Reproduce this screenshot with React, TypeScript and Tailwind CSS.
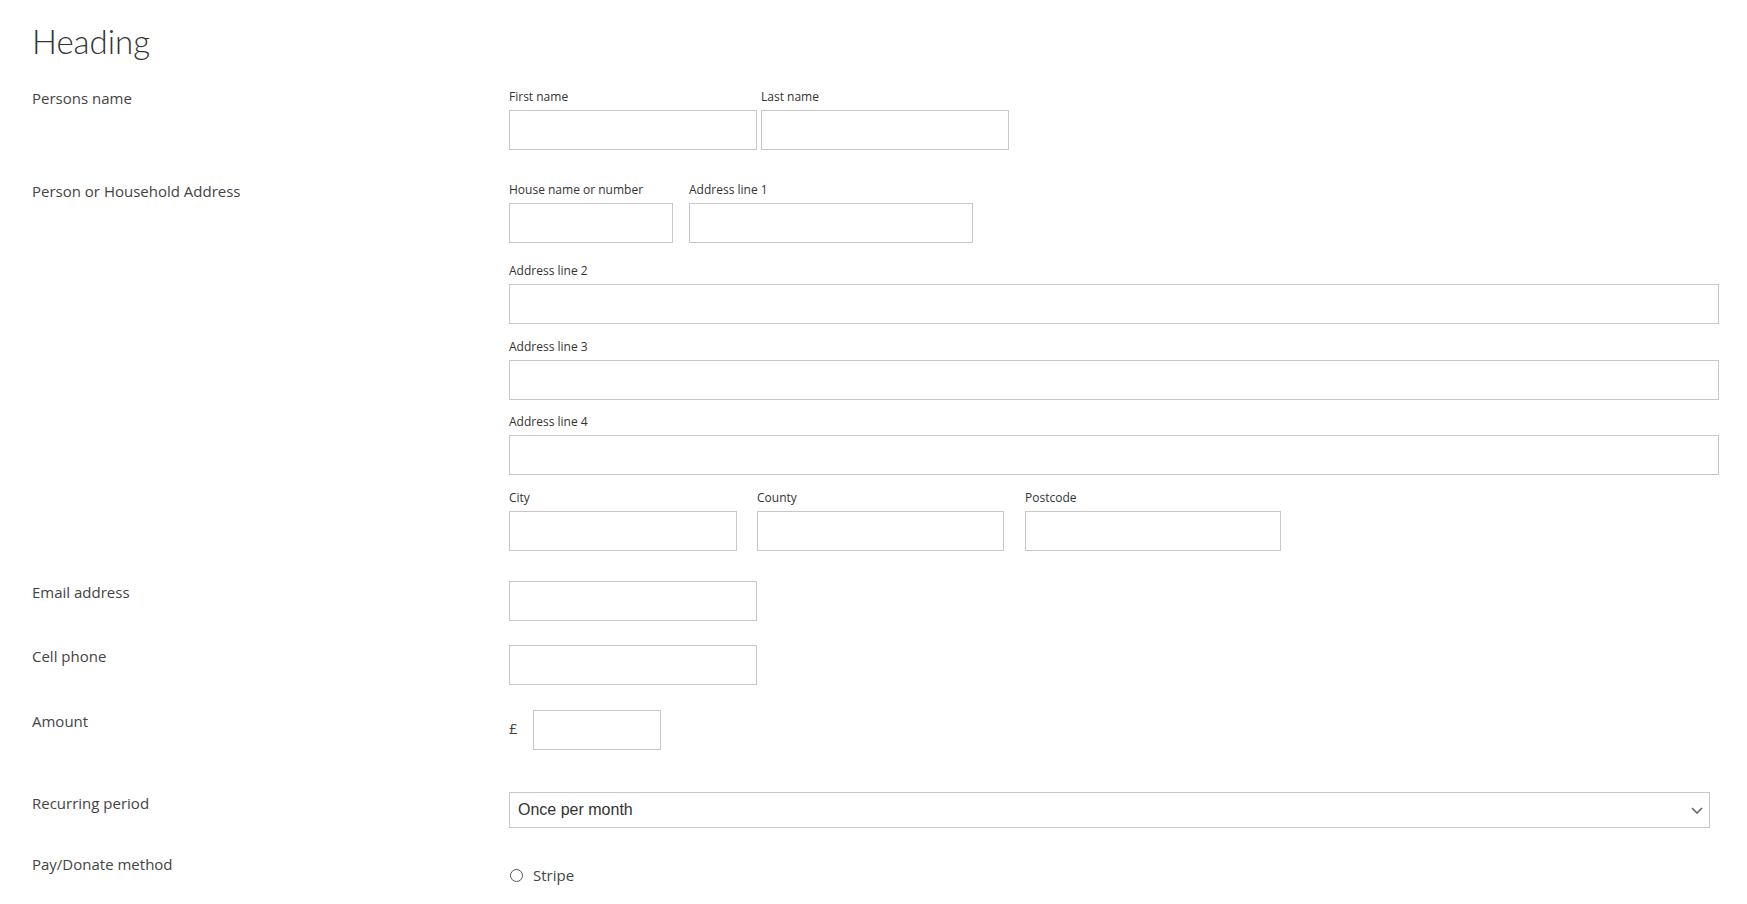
import React from "react";

function SubField({ label, className }: { label: string; className: string }) {
  return (
    <div className={className}>
      <div className="h-[18px] text-[12px] leading-[18px] text-[#333] whitespace-nowrap">{label}</div>
      <input
        type="text"
        className="mt-[4px] block h-[40px] w-full border border-[#c8c8c8] bg-white px-2 text-[15px] outline-none"
      />
    </div>
  );
}

function Row({
  label,
  className,
  labelClass = "",
  children,
}: {
  label: string;
  className: string;
  labelClass?: string;
  children: React.ReactNode;
}) {
  return (
    <div className={"flex items-start " + className}>
      <div className={"w-[477px] shrink-0 text-[15px] leading-[20px] text-[#444] " + labelClass}>{label}</div>
      <div className="flex-1 min-w-0">{children}</div>
    </div>
  );
}

export default function App() {
  return (
    <div className="min-h-screen bg-white pl-[32px] pr-[28px] pt-[21px] font-['Open_Sans','Noto_Sans',sans-serif] text-[#444]">
      <h1 className="font-['Lato','Open_Sans',sans-serif] text-[33px] leading-[40px] font-light text-[#333]">Heading</h1>

      <Row label="Persons name" className="mt-[27px]">
        <div className="flex gap-[4px]">
          <SubField label="First name" className="w-[248px]" />
          <SubField label="Last name" className="w-[248px]" />
        </div>
      </Row>

      <Row label="Person or Household Address" className="mt-[31px]">
        <div className="flex gap-[16px]">
          <SubField label="House name or number" className="w-[164px]" />
          <SubField label="Address line 1" className="w-[284px]" />
        </div>
        <SubField label="Address line 2" className="mt-[19px] w-full" />
        <SubField label="Address line 3" className="mt-[14px] w-full" />
        <SubField label="Address line 4" className="mt-[13px] w-full" />
        <div className="mt-[14px] flex">
          <SubField label="City" className="w-[228px]" />
          <SubField label="County" className="ml-[20px] w-[247px]" />
          <SubField label="Postcode" className="ml-[21px] w-[256px]" />
        </div>
      </Row>

      <Row label="Email address" className="mt-[30px]" labelClass="pt-[1px]">
        <input type="text" className="block h-[40px] w-[248px] border border-[#c8c8c8] bg-white px-2 outline-none" />
      </Row>

      <Row label="Cell phone" className="mt-[24px]" labelClass="pt-[1px]">
        <input type="text" className="block h-[40px] w-[248px] border border-[#c8c8c8] bg-white px-2 outline-none" />
      </Row>

      <Row label="Amount" className="mt-[25px]" labelClass="pt-[1px]">
        <div className="flex items-start">
          <span className="mt-[7px] w-[24px] text-[15px] leading-[22px] text-[#444]">£</span>
          <input type="text" className="block h-[40px] w-[128px] border border-[#c8c8c8] bg-white px-2 outline-none" />
        </div>
      </Row>

      <Row label="Recurring period" className="mt-[42px]" labelClass="pt-[1px]">
        <div className="flex h-[36px] w-[1201px] items-center justify-between border border-[#c8c8c8] bg-white pl-[8px] pr-[6px]">
          <span className="font-['Liberation_Sans',Arial,sans-serif] text-[16px] text-[#333]">Once per month</span>
          <svg width="12" height="7" viewBox="0 0 12 7" fill="none">
            <path d="M1 1l5 5 5-5" stroke="#666" strokeWidth="1.6" />
          </svg>
        </div>
      </Row>

      <Row label="Pay/Donate method" className="mt-[25px]" labelClass="pt-[1px]">
        <div className="flex items-center pt-[11px]">
          <span className="ml-[1px] inline-block h-[13px] w-[13px] rounded-full border border-[#555] bg-white" />
          <span className="ml-[10px] text-[15px] leading-[22px] text-[#444]">Stripe</span>
        </div>
      </Row>
    </div>
  );
}
